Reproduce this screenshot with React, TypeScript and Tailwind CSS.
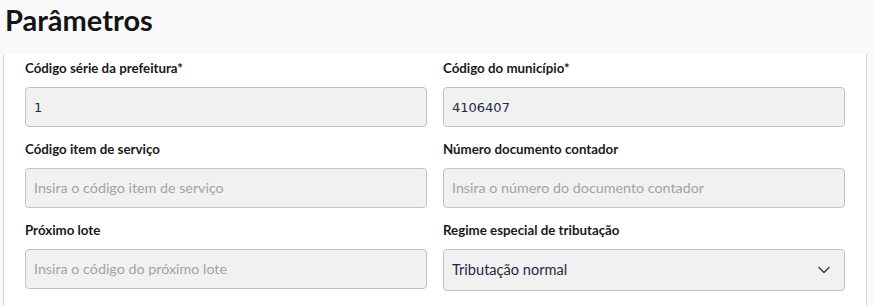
import { ChevronDown } from "lucide-react";

const fields = [
  { label: "Código série da prefeitura*", value: "1" },
  { label: "Código do município*", value: "4106407" },
  { label: "Código item de serviço", placeholder: "Insira o código item de serviço" },
  { label: "Número documento contador", placeholder: "Insira o número do documento contador" },
  { label: "Próximo lote", placeholder: "Insira o código do próximo lote" },
];

function Field({ label, value, placeholder }: { label: string; value?: string; placeholder?: string }) {
  return (
    <div className="flex flex-col">
      <label className="h-[18px] text-[13.3px] leading-[18px] font-bold text-[#1a1a1a]">{label}</label>
      <input
        readOnly
        defaultValue={value}
        placeholder={placeholder}
        className="mt-[10px] h-[40px] rounded-[4px] border border-[#c2c2c2] bg-[#f1f1f1] px-[8px] text-[13px] text-[#1f2a44] placeholder:text-[#a3a3a3] placeholder:text-[14.3px] placeholder:font-['Lato',sans-serif] font-['DejaVu_Sans',sans-serif] outline-none"
      />
    </div>
  );
}

export default function App() {
  return (
    <div className="min-h-[306px] bg-[#fafafa] font-['Lato',sans-serif]">
      <h1 className="h-[54px] pl-[5px] pt-[2px] text-[29px] leading-[36px] font-bold text-[#141414]">Parâmetros</h1>
      <div className="mx-[3px] mr-[6px] border-x border-[#d4d4d4] bg-white px-[21px] pt-[5px] pb-[20px]">
        <div className="grid grid-cols-2 gap-x-[16px] gap-y-[13px]">
          {fields.map((f) => (
            <Field key={f.label} {...f} />
          ))}
          <div className="flex flex-col">
            <label className="h-[18px] text-[13.3px] leading-[18px] font-bold text-[#1a1a1a]">Regime especial de tributação</label>
            <div className="mt-[10px] flex h-[42px] items-center justify-between rounded-[4px] border border-[#c2c2c2] bg-[#f1f1f1] pl-[8px] pr-[10px]">
              <span className="text-[14.6px] text-[#1f2a44]">Tributação normal</span>
              <ChevronDown className="h-[20px] w-[20px] text-[#333]" strokeWidth={1.5} />
            </div>
          </div>
        </div>
      </div>
    </div>
  );
}
